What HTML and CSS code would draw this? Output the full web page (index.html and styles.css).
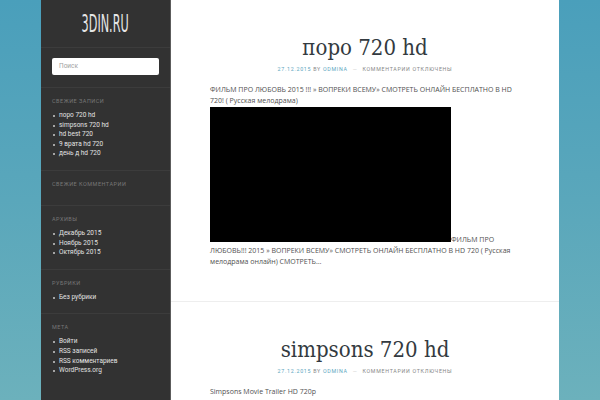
FILE: index.html
```html
<!DOCTYPE html>
<html lang="ru">
<head>
<meta charset="utf-8">
<title>3DIN.RU</title>
<link rel="stylesheet" href="styles.css">
</head>
<body>
<div class="page">
  <aside class="sidebar">
    <header class="site-header">
      <span class="site-title">3DIN.RU</span>
    </header>
    <section class="widget widget-search">
      <div class="search-field">Поиск</div>
    </section>
    <section class="widget">
      <h2 class="widget-title">Свежие записи</h2>
      <ul class="widget-list">
        <li>поро 720 hd</li>
        <li>simpsons 720 hd</li>
        <li>hd best 720</li>
        <li>9 врата hd 720</li>
        <li>день д hd 720</li>
      </ul>
    </section>
    <section class="widget">
      <h2 class="widget-title">Свежие комментарии</h2>
      <ul class="widget-list"></ul>
    </section>
    <section class="widget">
      <h2 class="widget-title">Архивы</h2>
      <ul class="widget-list">
        <li>Декабрь 2015</li>
        <li>Ноябрь 2015</li>
        <li>Октябрь 2015</li>
      </ul>
    </section>
    <section class="widget">
      <h2 class="widget-title">Рубрики</h2>
      <ul class="widget-list">
        <li>Без рубрики</li>
      </ul>
    </section>
    <section class="widget widget-last">
      <h2 class="widget-title">Мета</h2>
      <ul class="widget-list">
        <li>Войти</li>
        <li>RSS записей</li>
        <li>RSS комментариев</li>
        <li>WordPress.org</li>
      </ul>
    </section>
  </aside>
  <main class="content">
    <article class="post">
      <h1 class="post-title">поро 720 hd</h1>
      <div class="post-meta"><span class="link">27.12.2015</span> by <span class="link">odmina</span><span class="sep">—</span>Комментарии отключены</div>
      <div class="post-body">
        <p>ФИЛЬМ ПРО ЛЮБОВЬ 2015 !!! » ВОПРЕКИ ВСЕМУ» СМОТРЕТЬ ОНЛАЙН БЕСПЛАТНО В HD 720! ( Русская мелодрама)<br><span class="video"></span>ФИЛЬМ ПРО ЛЮБОВЬ!!! 2015 » ВОПРЕКИ ВСЕМУ» СМОТРЕТЬ ОНЛАЙН БЕСПЛАТНО В HD 720 ( Русская мелодрама онлайн) СМОТРЕТЬ…</p>
      </div>
    </article>
    <article class="post">
      <h1 class="post-title">simpsons 720 hd</h1>
      <div class="post-meta"><span class="link">27.12.2015</span> by <span class="link">odmina</span><span class="sep">—</span>Комментарии отключены</div>
      <div class="post-body">
        <p>Simpsons Movie Trailer HD 720p</p>
      </div>
    </article>
  </main>
</div>
</body>
</html>
```
FILE: styles.css
```css
html, body {
  margin: 0;
  padding: 0;
  height: 100%;
}
body {
  background: linear-gradient(to bottom, #4a9fbb 0%, #5aa7bb 50%, #6cb1bc 100%);
  font-family: "Roboto", "Liberation Sans", sans-serif;
  overflow: hidden;
}
.page {
  display: flex;
  margin-left: 41px;
  width: 518px;
  height: 400px;
  overflow: hidden;
  align-items: stretch;
}
.sidebar {
  width: 129px;
  flex: none;
  background: #323232;
  border-right: 1px solid #5c5c5c;
}
.site-header {
  height: 47px;
  display: flex;
  align-items: center;
  justify-content: center;
  border-bottom: 1px solid #3c3c3c;
}
.site-title {
  display: inline-block;
  font-family: "DejaVu Sans Condensed", "DejaVu Sans", sans-serif;
  font-weight: 200;
  font-size: 25px;
  color: #e6e6e6;
  transform: scaleX(0.5);
  margin-top: -1px;
}
.widget {
  padding: 9px 11px 11px;
  border-bottom: 1px solid #3c3c3c;
}
.widget-last {
  border-bottom: 0;
}
.widget-search {
  padding: 10px 11px 12px;
}
.search-field {
  height: 17px;
  background: #fff;
  border-radius: 2px;
  font-size: 6.5px;
  line-height: 17px;
  color: #a0a0a0;
  padding-left: 7px;
}
.widget-title {
  margin: 0 0 6px;
  font-size: 5.5px;
  line-height: 8px;
  font-weight: 400;
  text-transform: uppercase;
  letter-spacing: 0.5px;
  color: #777;
}
.widget-list {
  list-style: none;
  margin: 0;
  padding: 0;
}
.widget-list li {
  font-size: 6.5px;
  line-height: 9.6px;
  color: #e2e2e2;
  padding-left: 7px;
  position: relative;
}
.widget-list li::before {
  content: "";
  position: absolute;
  left: 1px;
  top: 4px;
  width: 2px;
  height: 2px;
  border-radius: 50%;
  background: #ccc;
}
.content {
  flex: 1;
  background: #fff;
}
.post {
  padding: 35px 39px 34px;
  border-bottom: 1px solid #eeeeee;
}
.post-title {
  margin: 0;
  text-align: center;
  font-family: "DejaVu Serif Condensed", "DejaVu Serif", serif;
  font-weight: 400;
  font-size: 22px;
  line-height: 26px;
  color: #333a40;
}
.post-meta {
  margin-top: 3px;
  text-align: center;
  font-size: 5.3px;
  line-height: 10px;
  letter-spacing: 0.7px;
  text-transform: uppercase;
  color: #888;
}
.post-meta .link {
  color: #5ba6c0;
}
.post-meta .sep {
  color: #ccc;
  margin: 0 5px;
}
.post-body {
  margin-top: 10px;
}
.post-body p {
  margin: 0;
  font-family: "Open Sans", "Noto Sans", sans-serif;
  font-size: 7px;
  line-height: 11px;
  color: #505050;
}
.video {
  display: inline-block;
  width: 241px;
  height: 135px;
  background: #000;
  vertical-align: baseline;
  margin-top: 1px;
}
```
